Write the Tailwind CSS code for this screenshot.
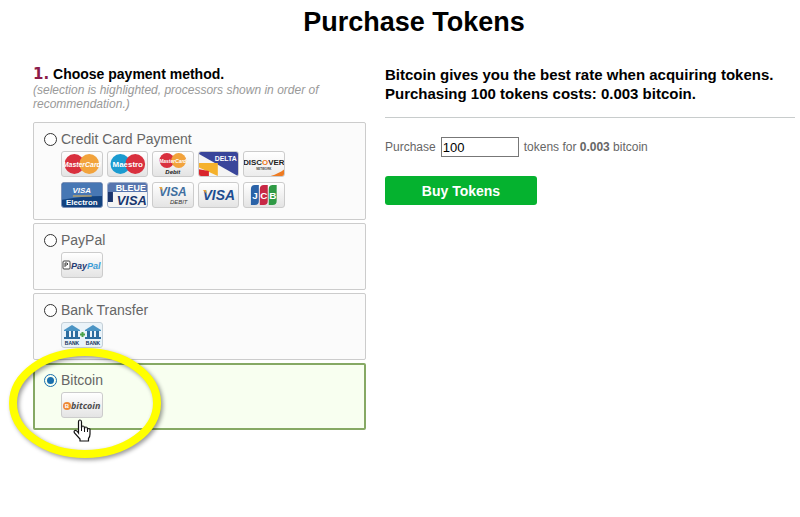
<!DOCTYPE html>
<html lang="en">
  <head>
    <meta charset="UTF-8" />
    <meta name="viewport" content="width=device-width, initial-scale=1.0" />
    <script src="https://cdn.jsdelivr.net/npm/@tailwindcss/browser@4"></script>
    <title>Purchase Tokens</title>
  </head>
  <body class="bg-white font-['Liberation_Sans',Arial,sans-serif] text-[#666]">
    <main class="min-h-screen pt-1 pl-[33px] pr-[5px] pb-10">
      <h1 class="text-center text-[27px] leading-9 font-bold text-black">
        Purchase Tokens
      </h1>

      <div class="mt-[25px] grid grid-cols-[333fr_410fr] gap-x-[19px]">
        <!-- Payment methods -->
        <section>
          <h2 class="text-sm leading-[18px] font-bold text-black">
            <span class="text-[15px] leading-[18px] text-[#8c1b4a] font-['DejaVu_Sans',sans-serif]">1.</span>
            Choose payment method.
          </h2>
          <p class="text-xs leading-[14px] italic text-[#999]">
            (selection is highlighted, processors shown in order of
            recommendation.)
          </p>

          <form class="mt-[11px] space-y-[3px] text-sm leading-4">
            <div class="rounded-xs border border-[#ccc] bg-[#fbfbfb] px-[10px] pt-2 pb-[11px]">
              <label class="flex items-center gap-1">
                <input type="radio" name="method" value="card" class="size-[13px] appearance-none rounded-full border border-[#333] bg-white" />
                Credit Card Payment
              </label>
              <div class="mt-1 ml-[17px] grid w-[224px] grid-cols-5 gap-x-1 gap-y-[5px]">
                <!-- MasterCard -->
                <svg viewBox="1 1 40 24" class="h-[26px] w-full rounded-[3px] border border-[#ccc] bg-linear-to-b from-white to-[#e4e4e4]">
                  <circle cx="13.500" cy="13" r="10" fill="#d9303e" />
                  <circle cx="28.500" cy="13" r="10" fill="#f2a33c" />
                  <text x="21" y="16" text-anchor="middle" font-size="7" font-weight="bold" font-style="italic" fill="#fff">MasterCard</text>
                </svg>
                <!-- Maestro -->
                <svg viewBox="1 1 40 24" class="h-[26px] w-full rounded-[3px] border border-[#ccc] bg-linear-to-b from-white to-[#e4e4e4]">
                  <circle cx="13.500" cy="13" r="10" fill="#1b9bd0" />
                  <circle cx="28.500" cy="13" r="10" fill="#d9303e" />
                  <text x="21" y="16" text-anchor="middle" font-size="8" font-weight="bold" fill="#fff">Maestro</text>
                </svg>
                <!-- MasterCard Debit -->
                <svg viewBox="1 1 40 24" class="h-[26px] w-full rounded-[3px] border border-[#ccc] bg-linear-to-b from-white to-[#e4e4e4]">
                  <circle cx="15" cy="9.500" r="7.500" fill="#d9303e" />
                  <circle cx="27" cy="9.500" r="7.500" fill="#f2a33c" />
                  <text x="21" y="12" text-anchor="middle" font-size="5" font-weight="bold" font-style="italic" fill="#fff">MasterCard</text>
                  <text x="21" y="23" text-anchor="middle" font-size="6" font-weight="bold" font-style="italic" fill="#222">Debit</text>
                </svg>
                <!-- Delta -->
                <svg viewBox="1 1 40 24" preserveAspectRatio="none" class="h-[26px] w-full rounded-[3px] border border-[#ccc] bg-[#f4f4f4]">
                  <path d="M0 0H42V26L1 3Z" fill="#39459a" />
                  <path d="M0 12H20V25L0 16Z" fill="#f5b12b" />
                  <path d="M0 18L11 20V26H0Z" fill="#d9252c" />
                  <text x="28" y="10" text-anchor="middle" font-size="7" font-weight="bold" fill="#fff">DELTA</text>
                </svg>
                <!-- Discover -->
                <svg viewBox="1 1 40 24" class="h-[26px] w-full rounded-[3px] border border-[#ccc] bg-linear-to-b from-white to-[#ececec]">
                  <path d="M25 26Q36 23 42 18V26Z" fill="#ee7b22" />
                  <text x="21" y="14" text-anchor="middle" font-size="8" font-weight="bold" fill="#222">DISC<tspan fill="#ee7b22">O</tspan>VER</text>
                  <text x="21" y="19" text-anchor="middle" font-size="3" font-weight="bold" fill="#444">NETWORK</text>
                </svg>
                <!-- Visa Electron -->
                <svg viewBox="1 1 40 24" preserveAspectRatio="none" class="h-[26px] w-full rounded-[3px] border border-[#7d92b8] bg-[#12427f]">
                  <path d="M0 0H42V14Q20 14 0 18Z" fill="#4777b4" />
                  <text x="21" y="11" text-anchor="middle" font-size="8" font-weight="bold" font-style="italic" fill="#fff">VISA</text>
                  <path d="M12 14H31" stroke="#e9b64a" />
                  <text x="21" y="23" text-anchor="middle" font-size="8" font-weight="bold" fill="#fff">Electron</text>
                </svg>
                <!-- Carte Bleue -->
                <svg viewBox="1 1 40 24" preserveAspectRatio="none" class="h-[26px] w-full rounded-[3px] border border-[#9aabc8] bg-[#f4f4f4]">
                  <path d="M0 0H42V10H0Z" fill="#5675ae" />
                  <path d="M0 10H6V20H0Z" fill="#1b356d" />
                  <text x="24" y="9" text-anchor="middle" font-size="9" font-weight="bold" fill="#fff">BLEUE</text>
                  <text x="25" y="23" text-anchor="middle" font-size="13" font-weight="bold" font-style="italic" fill="#17356f">VISA</text>
                </svg>
                <!-- Visa Debit -->
                <svg viewBox="1 1 40 24" class="h-[26px] w-full rounded-[3px] border border-[#ccc] bg-linear-to-b from-white to-[#e4e4e4]">
                  <text x="21" y="14" text-anchor="middle" font-size="12" font-weight="bold" font-style="italic" fill="#3f6f9f">VISA</text>
                  <path d="M7 5H10L11 9Z" fill="#e8a43a" />
                  <text x="27" y="22" text-anchor="middle" font-size="6" font-style="italic" fill="#333">DEBIT</text>
                </svg>
                <!-- Visa -->
                <svg viewBox="1 1 40 24" class="h-[26px] w-full rounded-[3px] border border-[#ccc] bg-linear-to-b from-white to-[#e4e4e4]">
                  <text x="21" y="18" text-anchor="middle" font-size="14" font-weight="bold" font-style="italic" fill="#1d4c90">VISA</text>
                  <path d="M5 8H8L9 12Z" fill="#e8a43a" />
                </svg>
                <!-- JCB -->
                <svg viewBox="1 1 40 24" class="h-[26px] w-full rounded-[3px] border border-[#ccc] bg-linear-to-b from-white to-[#e4e4e4]">
                  <path d="M8 7Q8 3 12 3H16V19Q16 23 12 23H8Z" fill="#2b63a8" />
                  <path d="M17 7Q17 3 21 3H25V19Q25 23 21 23H17Z" fill="#c72845" />
                  <path d="M26 7Q26 3 30 3H34V19Q34 23 30 23H26Z" fill="#2f9a45" />
                  <g font-size="10" font-weight="bold" fill="#fff" text-anchor="middle">
                    <text x="12" y="17">J</text>
                    <text x="21" y="17">C</text>
                    <text x="30" y="17">B</text>
                  </g>
                </svg>
              </div>
            </div>

            <div class="rounded-xs border border-[#ccc] bg-[#fbfbfb] px-[10px] pt-2 pb-[11px]">
              <label class="flex items-center gap-1">
                <input type="radio" name="method" value="paypal" class="size-[13px] appearance-none rounded-full border border-[#333] bg-white" />
                PayPal
              </label>
              <svg viewBox="1 1 40 24" class="mt-1 ml-[17px] h-[26px] w-[42px] rounded-[3px] border border-[#ccc] bg-linear-to-b from-white to-[#e4e4e4]">
                <rect x="2" y="9" width="7" height="8" rx="1" fill="#fff" stroke="#444" />
                <path d="M4 15V11H6Q8 12 6 13H4" fill="none" stroke="#444" />
                <text x="10" y="17" font-size="9" font-weight="bold" font-style="italic" fill="#253b73">Pay<tspan fill="#3a9bd6">Pal</tspan></text>
              </svg>
            </div>

            <div class="rounded-xs border border-[#ccc] bg-[#fbfbfb] px-[10px] pt-2 pb-[11px]">
              <label class="flex items-center gap-1">
                <input type="radio" name="method" value="bank" class="size-[13px] appearance-none rounded-full border border-[#333] bg-white" />
                Bank Transfer
              </label>
              <svg viewBox="1 1 40 24" class="mt-1 ml-[17px] h-[26px] w-[42px] rounded-[3px] border border-[#c5d0d8] bg-[#eaf3f9]">
                <g fill="#2c6d9f">
                  <path d="M3 8L11 3L19 8V9H3Z" fill="#4a94c4" />
                  <path d="M5 9H8V15H5ZM10 9H12V15H10ZM14 9H17V15H14ZM3 15H19V17H3Z" />
                  <path d="M24 8L32 3L40 8V9H24Z" fill="#4a94c4" />
                  <path d="M26 9H29V15H26ZM31 9H33V15H31ZM35 9H38V15H35ZM24 15H40V17H24Z" />
                </g>
                <path d="M19 12.500H24M21.500 10V15" stroke="#4ba34a" stroke-width="2" />
                <g font-size="5" font-weight="bold" fill="#14325c" text-anchor="middle">
                  <text x="11" y="23">BANK</text>
                  <text x="32" y="23">BANK</text>
                </g>
              </svg>
            </div>

            <div class="relative rounded-xs border-2 border-[#86a964] bg-[#f8fff0] px-[9px] pt-[7px] pb-[10px]">
              <label class="flex items-center gap-1">
                <input type="radio" name="method" value="bitcoin" checked class="size-[13px] appearance-none rounded-full border border-[#1a6fad] bg-[#1a6fad] bg-clip-content p-[2px]" />
                Bitcoin
              </label>
              <svg viewBox="1 1 40 24" class="mt-1 ml-[17px] h-[26px] w-[42px] rounded-[3px] border border-[#ccc] bg-linear-to-b from-white to-[#e4e4e4]">
                <circle cx="6" cy="14" r="4" fill="#ef8a35" />
                <text x="6" y="16" text-anchor="middle" font-size="6" font-weight="bold" fill="#fff">B</text>
                <text x="10" y="17" font-size="9" font-weight="bold" font-style="italic" fill="#4d4d4d" font-family="Open Sans">bitcoin</text>
              </svg>

              <!-- Highlight ring -->
              <svg viewBox="0 0 160 120" class="pointer-events-none absolute -top-[20px] -left-[30px] h-[120px] w-[160px] drop-shadow-[2px_2px_2px_rgba(0,0,0,0.4)]">
                <ellipse cx="80" cy="58" rx="72" ry="51" fill="none" stroke="#ffff00" stroke-width="8" />
              </svg>
              <!-- Hand pointer -->
              <svg viewBox="0 0 18 24" class="pointer-events-none absolute top-[54px] left-[38px] h-6 w-[18px]">
                <path d="M5.500 14V3Q5.500 1 7 1T8.500 3V9Q8.500 7 10 7T11.500 9V10Q11.500 8 13 8T14.500 10V11Q14.500 9.500 15.800 9.500T17 11V15Q17 18 15.500 19.500V22H7V20L1.500 14Q0.500 12 2 11.500T5.500 14Z" fill="#fff" stroke="#111" stroke-width="1.200" />
                <path d="M8.500 9V12M11.500 10V13M14.500 11V13" stroke="#111" />
              </svg>
            </div>
          </form>
        </section>

        <!-- Purchase -->
        <section>
          <h2 class="text-[15px] leading-[19px] font-bold text-black">
            Bitcoin gives you the best rate when acquiring tokens.<br />
            Purchasing 100 tokens costs: 0.003 bitcoin.
          </h2>
          <hr class="mt-[14px] border-[#c8cccc]" />
          <form class="mt-[19px]">
            <div class="flex items-center gap-[5px] text-xs">
              <label for="amount">Purchase</label>
              <input id="amount" type="text" value="100" class="h-5 w-[78px] border border-[#777] bg-white px-px text-[13px] text-black" />
              <span>tokens for <b>0.003</b> bitcoin</span>
            </div>
            <button type="button" class="mt-[19px] h-[29px] w-[152px] rounded-[3px] bg-[#05b22f] text-sm font-bold text-white">
              Buy Tokens
            </button>
          </form>
        </section>
      </div>
    </main>
  </body>
</html>
